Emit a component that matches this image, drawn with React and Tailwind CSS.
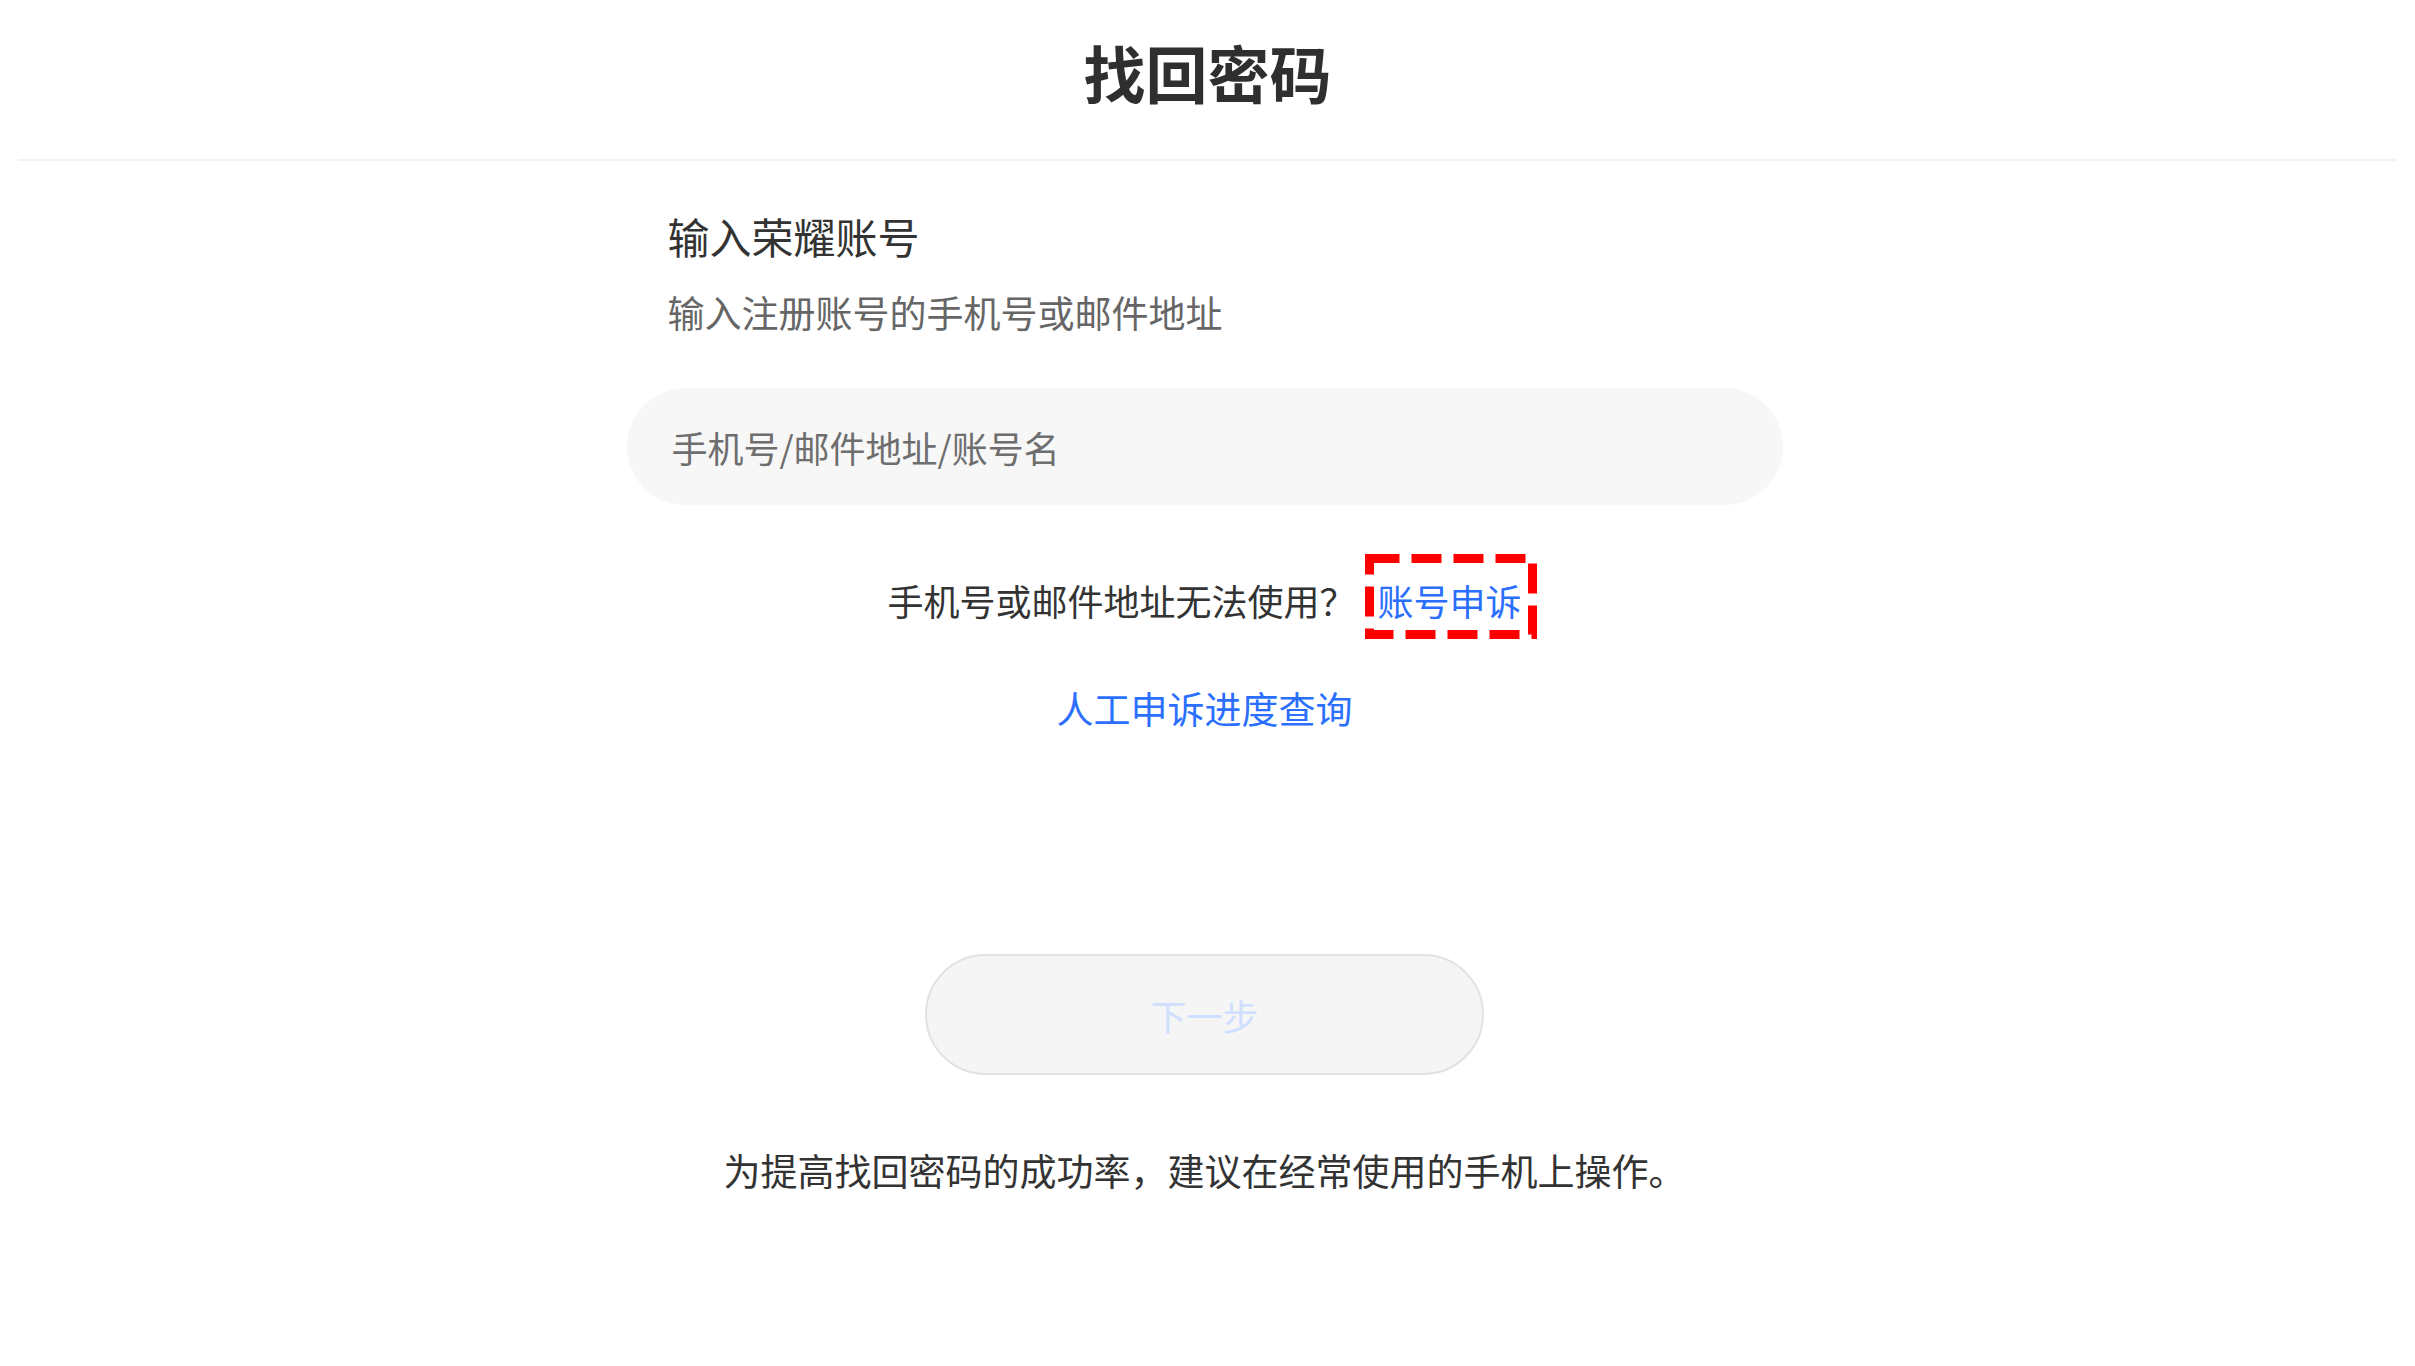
import React, { useState } from 'react'

const App = () => {
  const [account, setAccount] = useState('')

  return (
    <div className="min-h-screen bg-white text-[#333] font-['Noto_Sans_CJK_SC','Noto_Sans',sans-serif]">
      <header className="h-[159px] pt-[41px] text-center">
        <h1 className="text-[62px] leading-[62px] font-bold text-[#2f2f2f]">找回密码</h1>
      </header>
      <div className="mx-[18px] h-[2px] bg-[#f2f2f2]" />

      <div className="pr-[6px]">
        <main className="w-[1156px] mx-auto">
          <div className="px-[41px]">
            <h2 className="mt-[50px] text-[42px] leading-[50px] text-[#333]">输入荣耀账号</h2>
            <p className="mt-[29px] text-[37px] leading-[44px] text-[#666]">输入注册账号的手机号或邮件地址</p>
          </div>

          <input
            type="text"
            value={account}
            onChange={(e) => setAccount(e.target.value)}
            placeholder="手机号/邮件地址/账号名"
            className="mt-[54px] block w-full h-[117px] rounded-full bg-[#f7f7f7] px-[45px] text-[36px] text-[#333] placeholder:text-[#6e6e6e] outline-none"
          />

          <p className="mt-[73px] text-center text-[36px] leading-[44px] text-[#333]">
            手机号或邮件地址无法使用？
            <span className="relative ml-[22px] text-[#2b6fff] cursor-pointer">
              账号申诉
              <svg className="absolute left-[-13px] top-[-20px] pointer-events-none" width="172" height="85" viewBox="0 0 172 85">
                <rect x="4.5" y="4.5" width="163" height="76" fill="none" stroke="#ff0000" strokeWidth="9" strokeDasharray="30 12" />
              </svg>
            </span>
          </p>

          <p className="mt-[64px] text-center text-[37px] leading-[44px] text-[#2b6fff] cursor-pointer">人工申诉进度查询</p>

          <button
            disabled
            className="mt-[224px] mx-auto flex items-center justify-center w-[559px] h-[121px] rounded-full border-2 border-[#e2e2e2] bg-[#f5f5f5] text-[36px] text-[#cfdfff]"
          >
            下一步
          </button>

          <p className="mt-[73px] text-center text-[37px] leading-[44px] text-[#333] whitespace-nowrap">
            为提高找回密码的成功率，建议在经常使用的手机上操作。
          </p>
        </main>
      </div>
    </div>
  )
}

export default App
